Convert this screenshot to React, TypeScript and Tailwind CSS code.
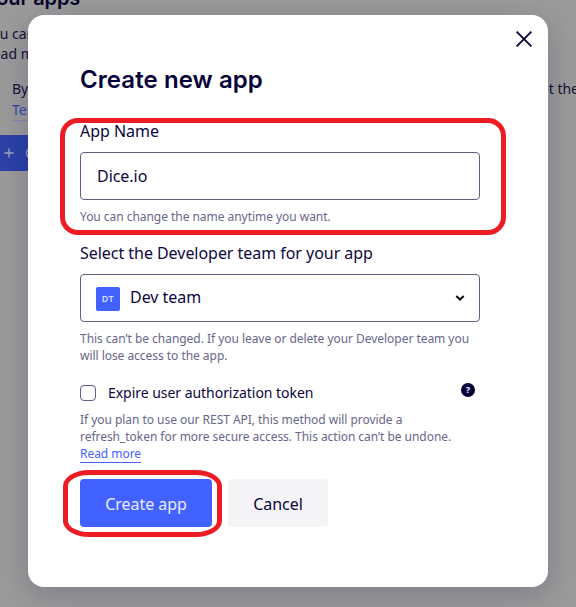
import React from "react";

function BackgroundPage() {
  return (
    <div className="flow-root h-full w-full overflow-hidden bg-[#9b9b9b] text-[14px] leading-5 text-[#15103a]">
      <div className="-ml-4 whitespace-nowrap">
        <h2 className="-mt-4 h-[38px] font-['Inter',sans-serif] text-[20px] leading-7 font-semibold tracking-[-0.1px] text-[#080530]">
          Your apps
        </h2>
        <p className="mt-0.5">You can create apps</p>
        <p>Read more</p>
      </div>
      <div className="mt-[15px] ml-3 flex justify-between whitespace-nowrap">
        <div>
          <p>By</p>
          <span className="inline-block h-[22px] border-b border-[#8189b8] leading-[22px] text-[#3447a8]">Terms</span>
        </div>
        <span className="-mr-[3px]">accept the</span>
      </div>
      <div className="mt-[14px] flex h-9 w-[120px] items-center bg-[#2d41a8] pl-1 text-[#9da4c4]">
        <svg className="h-[10px] w-[10px]" viewBox="0 0 10 10" fill="none" stroke="#a4a9c0" strokeWidth="1.3">
          <path d="M5 .5v9M.5 5h9" />
        </svg>
        <span className="ml-[11px]">Create</span>
      </div>
    </div>
  );
}

function Modal() {
  return (
    <section className="absolute top-[15px] left-7 h-[572px] w-[520px] rounded-2xl bg-white pt-[47px] pr-[68px] pl-[52px] text-[16px] tracking-[-0.04px] text-[#0c0740] shadow-[0_8px_32px_rgba(5,0,56,0.2)]">
      <button className="absolute top-4 right-4 h-4 w-4" aria-label="Close">
        <svg viewBox="0 0 16 16" fill="none" stroke="#050038" strokeWidth="1.8">
          <path d="m.6.6 14.8 14.8M15.4.6.6 15.4" />
        </svg>
      </button>
      <h1 className="h-9 font-['Inter',sans-serif] text-[24px] leading-9 font-semibold tracking-[0.08px] whitespace-nowrap text-[#050038]">
        Create new app
      </h1>
      <label className="mt-[21px] block leading-6">App Name</label>
      <div className="mt-[9px] flex h-12 items-center rounded border border-[#625d82] px-4">Dice.io</div>
      <p className="mt-2 text-[12px] leading-[17px] text-[#69668b]">You can change the name anytime you want.</p>
      <label className="mt-4 block leading-6">Select the Developer team for your app</label>
      <div className="mt-[9px] flex h-12 items-center rounded border border-[#625d82] pr-[14px] pl-[15px]">
        <span className="mt-0.5 flex h-6 w-6 items-center justify-center rounded-[2px] bg-[#4262ff] text-[9px] font-semibold tracking-[0.5px] text-[#d7ddff]">
          DT
        </span>
        <span className="-mt-0.5 ml-[10px]">Dev team</span>
        <svg className="ml-auto h-2 w-[10px]" viewBox="0 0 10 8" fill="none" stroke="#111" strokeWidth="2">
          <path d="m1.3 2 3.7 3.5L8.7 2" />
        </svg>
      </div>
      <p className="mt-2 text-[12px] leading-[17px] text-[#69668b]">
        This can’t be changed. If you leave or delete your Developer team you will lose access to the app.
      </p>
      <div className="mt-[18px] flex h-[22px] items-center">
        <span className="h-4 w-4 rounded border border-[#625d82]" />
        <span className="-mt-0.5 ml-3 text-[14px]">Expire user authorization token</span>
        <span className="mr-[5px] mb-[7px] ml-auto flex h-[14px] w-[14px] items-center justify-center rounded-full bg-[#050038] text-[9px] leading-none font-bold text-white">
          ?
        </span>
      </div>
      <p className="mt-[7px] text-[12px] leading-[17px] whitespace-nowrap text-[#69668b]">
        If you plan to use our REST API, this method will provide a<br />
        refresh_token for more secure access. This action can’t be undone.<br />
        <a className="inline-block h-[18px] border-b border-[#4262ff] text-[#4262ff]">Read more</a>
      </p>
      <div className="mt-4 flex gap-4">
        <button className="h-12 w-[132px] rounded bg-[#4262ff] pt-0.5 text-[#e8ecff]">Create app</button>
        <button className="h-12 w-[100px] rounded bg-[#f4f4f6] pt-0.5">Cancel</button>
      </div>
    </section>
  );
}

export default function App() {
  return (
    <main className="relative h-[607px] w-[576px] overflow-hidden font-['Noto_Sans',sans-serif]">
      <BackgroundPage />
      <Modal />
      <div className="absolute top-[118px] left-[60px] h-[117px] w-[446px] rounded-[18px] border-[5px] border-[#ed1c24]" />
      <div className="absolute top-[470px] left-[63px] h-[67px] w-[159px] rounded-[26px/16px] border-[5px] border-[#ed1c24]" />
    </main>
  );
}
